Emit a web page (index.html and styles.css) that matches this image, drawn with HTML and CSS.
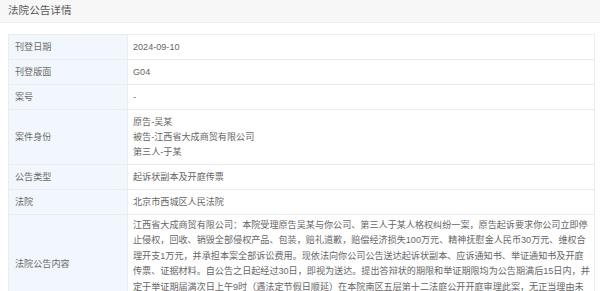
FILE: index.html
```html
<!DOCTYPE html>
<html lang="zh-CN">
<head>
<meta charset="utf-8">
<title>法院公告详情</title>
<link rel="stylesheet" href="styles.css">
</head>
<body>
<div class="page">
  <div class="header">法院公告详情</div>
  <table class="detail">
    <tr><th>刊登日期</th><td>2024-09-10</td></tr>
    <tr><th>刊登版面</th><td>G04</td></tr>
    <tr><th>案号</th><td>-</td></tr>
    <tr><th>案件身份</th><td>原告-吴某<br>被告-江西省大成商贸有限公司<br>第三人-于某</td></tr>
    <tr><th>公告类型</th><td>起诉状副本及开庭传票</td></tr>
    <tr><th>法院</th><td>北京市西城区人民法院</td></tr>
    <tr><th>法院公告内容</th><td class="long">江西省大成商贸有限公司：本院受理原告吴某与你公司、第三人于某人格权纠纷一案，原告起诉要求你公司立即停止侵权，回收、销毁全部侵权产品、包装，赔礼道歉，赔偿经济损失100万元、精神抚慰金人民币30万元、维权合理开支1万元，并承担本案全部诉讼费用。现依法向你公司公告送达起诉状副本、应诉通知书、举证通知书及开庭传票、证据材料。自公告之日起经过30日，即视为送达。提出答辩状的期限和举证期限均为公告期满后15日内，并定于举证期届满次日上午9时（遇法定节假日顺延）在本院南区五层第十二法庭公开开庭审理此案，无正当理由未到庭的，本院将依法缺席判决。</td></tr>
  </table>
</div>
</body>
</html>
```

FILE: styles.css
```css
html, body {
  margin: 0;
  padding: 0;
  background: #ffffff;
}
body {
  font-family: "Liberation Sans", "Noto Sans CJK SC", sans-serif;
  color: #666;
}
.header {
  height: 23px;
  line-height: 21px;
  padding-left: 8px;
  background: #f7f7f7;
  border-bottom: 1px solid #f0f0f0;
  font-size: 10.6px;
  color: #5a5a5a;
  box-sizing: border-box;
}
.detail {
  margin: 11px 5px 0 8px;
  width: 587px;
  border-collapse: collapse;
  font-size: 9.1px;
  line-height: 15px;
}
.detail th,
.detail td {
  border: 1px solid #e9edf1;
  padding: 4.5px 3.5px 4.5px 5px;
  vertical-align: middle;
  text-align: left;
}
.detail th {
  width: 107px;
  background: #f2f7fd;
  font-weight: normal;
  color: #6a6a6a;
  padding-left: 6px;
  padding-right: 5px;
}
.detail td {
  color: #666;
}
.detail .long {
  line-height: 15.4px;
  padding-top: 3px;
}
```
